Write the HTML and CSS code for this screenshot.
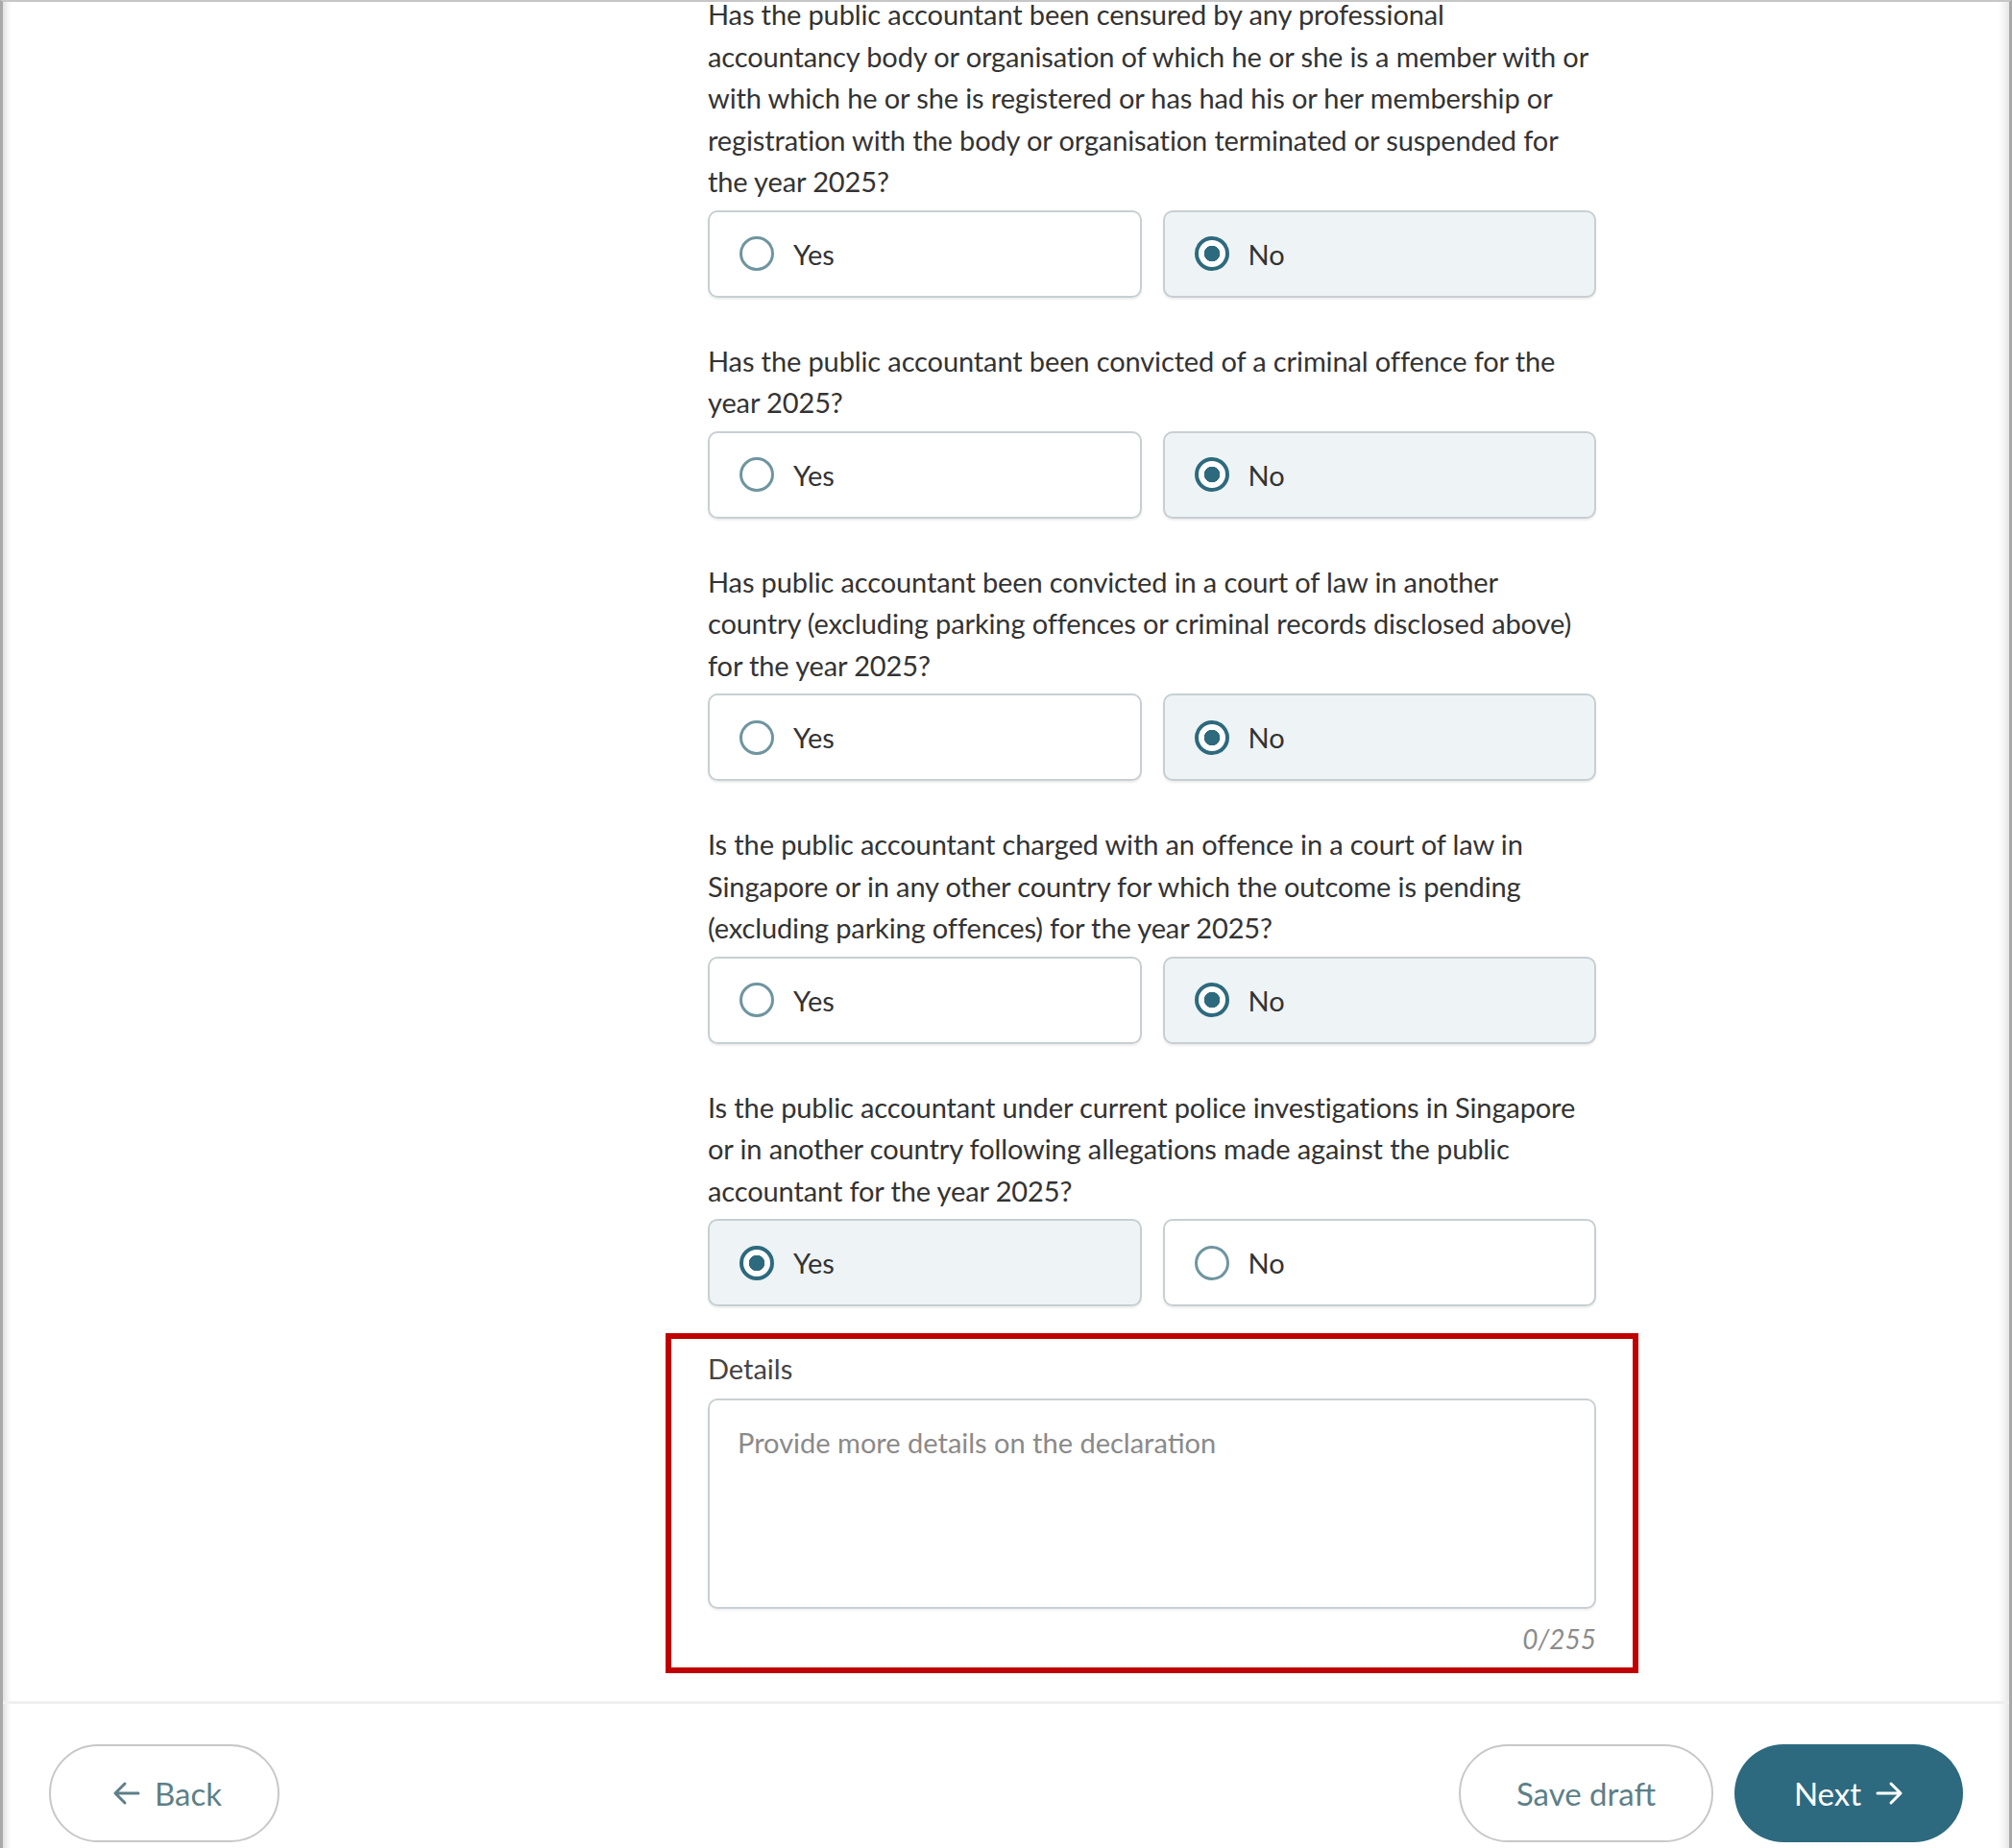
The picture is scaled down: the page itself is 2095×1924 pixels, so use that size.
FILE: index.html
```html
<!DOCTYPE html>
<html lang="en">
<head>
    <meta charset="UTF-8">
    <meta name="viewport" content="width=device-width, initial-scale=1.0">
    <title>Declaration</title>
    <link rel="stylesheet" href="styles.css">
</head>
<body>
    <div class="page">
        <main class="form">
            <div class="question">
                <p class="question-text">Has the public accountant been censured by any professional accountancy body or organisation of which he or she is a member with or with which he or she is registered or has had his or her membership or registration with the body or organisation terminated or suspended for the year 2025?</p>
                <div class="options">
                    <label class="option"><input type="radio" name="q1" value="yes"><span>Yes</span></label>
                    <label class="option selected"><input type="radio" name="q1" value="no" checked><span>No</span></label>
                </div>
            </div>

            <div class="question">
                <p class="question-text">Has the public accountant been convicted of a criminal offence for the year 2025?</p>
                <div class="options">
                    <label class="option"><input type="radio" name="q2" value="yes"><span>Yes</span></label>
                    <label class="option selected"><input type="radio" name="q2" value="no" checked><span>No</span></label>
                </div>
            </div>

            <div class="question">
                <p class="question-text">Has public accountant been convicted in a court of law in another country (excluding parking offences or criminal records disclosed above) for the year 2025?</p>
                <div class="options">
                    <label class="option"><input type="radio" name="q3" value="yes"><span>Yes</span></label>
                    <label class="option selected"><input type="radio" name="q3" value="no" checked><span>No</span></label>
                </div>
            </div>

            <div class="question">
                <p class="question-text">Is the public accountant charged with an offence in a court of law in Singapore or in any other country for which the outcome is pending (excluding parking offences) for the year 2025?</p>
                <div class="options">
                    <label class="option"><input type="radio" name="q4" value="yes"><span>Yes</span></label>
                    <label class="option selected"><input type="radio" name="q4" value="no" checked><span>No</span></label>
                </div>
            </div>

            <div class="question last">
                <p class="question-text">Is the public accountant under current police investigations in Singapore or in another country following allegations made against the public accountant for the year 2025?</p>
                <div class="options">
                    <label class="option selected"><input type="radio" name="q5" value="yes" checked><span>Yes</span></label>
                    <label class="option"><input type="radio" name="q5" value="no"><span>No</span></label>
                </div>
            </div>

            <div class="details">
                <label class="details-label" for="details">Details</label>
                <textarea id="details" placeholder="Provide more details on the declaration" maxlength="255"></textarea>
                <div class="counter">0/255</div>
            </div>
        </main>

        <footer class="actions">
            <button class="btn btn-outline btn-back">
                <svg width="30" height="28" viewBox="0 0 30 28" fill="none" stroke="currentColor" stroke-width="3" stroke-linecap="round" stroke-linejoin="round"><path d="M27 14H4M13 4L3 14l10 10"/></svg>
                Back
            </button>
            <div class="actions-right">
                <button class="btn btn-outline">Save draft</button>
                <button class="btn btn-primary">
                    Next
                    <svg width="30" height="28" viewBox="0 0 30 28" fill="none" stroke="currentColor" stroke-width="3" stroke-linecap="round" stroke-linejoin="round"><path d="M3 14h23M17 4l10 10-10 10"/></svg>
                </button>
            </div>
        </footer>
    </div>
</body>
</html>
```

FILE: styles.css
```css
html, body {
    margin: 0;
    padding: 0;
}

body {
    font-family: 'Lato', 'Open Sans', sans-serif;
    color: #333;
    background-color: #fff;
    overflow: hidden;
}

.page {
    min-height: 100vh;
    border-top: 2px solid #c6c6c6;
    border-left: 3px solid #a8a8a8;
    border-right: 3px solid #a8a8a8;
    box-shadow: inset 10px 0 8px -8px rgba(0,0,0,0.18), inset -14px 0 10px -10px rgba(0,0,0,0.12);
}

.form {
    width: 925px;
    margin-left: 734px;
    margin-top: -9px;
}

.question {
    margin-bottom: 44px;
}

.question.last {
    margin-bottom: 28px;
}

.question-text {
    margin: 0;
    font-size: 29px;
    line-height: 43.5px;
    letter-spacing: -0.12px;
}

.options {
    display: grid;
    grid-template-columns: 1fr 1fr;
    gap: 22px;
    margin-top: 8px;
}

.option {
    display: flex;
    align-items: center;
    gap: 20px;
    height: 91px;
    box-sizing: border-box;
    padding-left: 31px;
    border: 2px solid #c7cfd2;
    border-radius: 10px;
    box-shadow: 0 2px 2px rgba(0,0,0,0.07);
    font-size: 29px;
    cursor: pointer;
}

.option.selected {
    background-color: #eef3f5;
}

.option input {
    appearance: none;
    -webkit-appearance: none;
    margin: 0;
    width: 36px;
    height: 36px;
    border: 3px solid #6f959f;
    border-radius: 50%;
    box-sizing: border-box;
    background-color: #fff;
    flex-shrink: 0;
}

.option input:checked {
    border: 4px solid #2d6a7e;
    background: radial-gradient(circle, #2d6a7e 0 8px, #fff 8.5px);
}

.details {
    margin: 0 -44px;
    padding: 9px 38px 8px;
    border: 6px solid #c00000;
}

.details-label {
    display: block;
    font-size: 29px;
    line-height: 43.5px;
    color: #444;
}

.details textarea {
    display: block;
    width: 100%;
    height: 219px;
    box-sizing: border-box;
    margin-top: 9px;
    padding: 25px 29px;
    border: 2px solid #c9d0d3;
    border-radius: 10px;
    font-family: 'Lato', 'Open Sans', sans-serif;
    font-size: 29px;
    line-height: 38px;
    color: #333;
    resize: none;
    box-shadow: 0 2px 2px rgba(0,0,0,0.06);
}

.details textarea::placeholder {
    color: #8a8a8a;
}

.counter {
    margin-top: 10px;
    text-align: right;
    font-size: 28px;
    line-height: 43px;
    font-style: italic;
    color: #8c8c8c;
}

.actions {
    display: flex;
    justify-content: space-between;
    margin-top: 29px;
    padding: 42px 48px 0;
    border-top: 3px solid #efefef;
}

.actions-right {
    display: flex;
    gap: 22px;
}

.btn {
    display: flex;
    align-items: center;
    justify-content: center;
    gap: 14px;
    height: 102px;
    border-radius: 51px;
    font-family: 'Lato', 'Open Sans', sans-serif;
    font-size: 33px;
    cursor: pointer;
}

.btn-outline {
    background-color: #fff;
    border: 2px solid #c8c8c8;
    color: #5e7f88;
}

.btn-back {
    width: 240px;
    padding-left: 12px;
}

.actions-right .btn-outline {
    width: 265px;
}

.btn-primary {
    width: 238px;
    background-color: #2d6a7f;
    border: none;
    color: #fff;
}
```
